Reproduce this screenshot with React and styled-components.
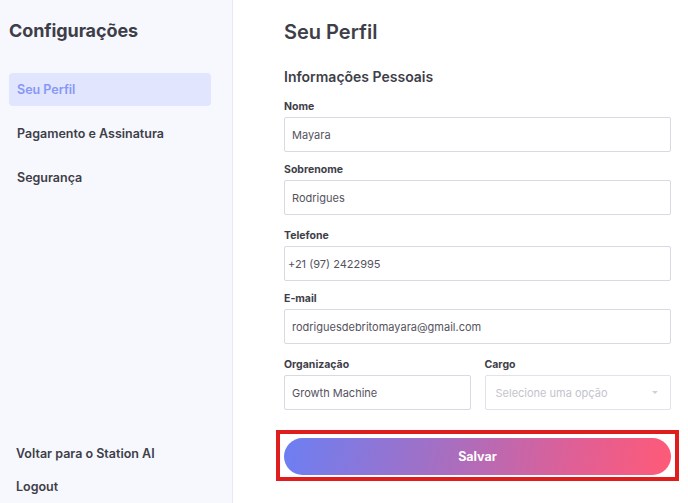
import React from "react";
import styled, { createGlobalStyle } from "styled-components";

const GlobalStyle = createGlobalStyle`
  html, body {
    margin: 0;
    padding: 0;
    background: #ffffff;
    font-family: Inter, "Noto Sans", sans-serif;
  }
  * { box-sizing: border-box; }
`;

const Page = styled.div`
  display: flex;
  height: 100vh;
  width: 100%;
  overflow: hidden;
`;

const Sidebar = styled.aside`
  width: 233px;
  flex-shrink: 0;
  background: #f6f8fe;
  border-right: 1px solid #e6e9f3;
  display: flex;
  flex-direction: column;
  justify-content: space-between;
  padding: 19px 21px 0 9px;
`;

const SideTitle = styled.h1`
  margin: 0 0 30px 0;
  font-size: 18px;
  line-height: 24px;
  font-weight: 700;
  color: #3e3e48;
  letter-spacing: -0.1px;
`;

const Nav = styled.nav`
  display: flex;
  flex-direction: column;
  gap: 11px;
`;

const NavItem = styled.a`
  display: flex;
  align-items: center;
  height: 33px;
  padding-left: 8px;
  border-radius: 4px;
  font-size: 12.5px;
  font-weight: 600;
  text-decoration: none;
  cursor: pointer;
  color: ${(p) => (p.$active ? "#8697f7" : "#3e3e48")};
  background: ${(p) => (p.$active ? "#e1e5fd" : "transparent")};
`;

const Bottom = styled.div`
  display: flex;
  flex-direction: column;
  padding-left: 7px;
`;

const BottomLink = styled.a`
  height: 33px;
  display: flex;
  align-items: center;
  font-size: 12.5px;
  font-weight: 600;
  color: #3e3e48;
  cursor: pointer;
`;

const Main = styled.main`
  flex: 1;
  padding: 19px 17px 0 51px;
  display: flex;
  flex-direction: column;
`;

const Title = styled.h2`
  margin: 0;
  font-size: 20px;
  line-height: 26px;
  font-weight: 600;
  color: #3e3e48;
`;

const Section = styled.h3`
  margin: 22px 0 13px 0;
  font-size: 14px;
  line-height: 20px;
  font-weight: 600;
  color: #3e3e48;
`;

const Form = styled.form`
  display: flex;
  flex-direction: column;
  gap: 11px;
`;

const Row = styled.div`
  display: flex;
  gap: 14px;
  margin-top: ${(p) => p.$push || 0}px;
`;

const Field = styled.label`
  display: flex;
  flex-direction: column;
  flex: 1;
  min-width: 0;
  margin-top: ${(p) => p.$push || 0}px;
`;

const Label = styled.span`
  font-size: 10.5px;
  line-height: 14px;
  font-weight: 700;
  color: #3e3e48;
  margin-bottom: 3px;
`;

const Input = styled.input`
  height: 35px;
  width: 100%;
  border: 1px solid #d8d9e2;
  border-radius: 2px;
  padding: 0 ${(p) => (p.$tight ? "3px" : "7px")};
  font-family: inherit;
  font-size: 11px;
  color: #55535e;
  outline: none;
  background: #fff;
`;

const Select = styled.div`
  height: 35px;
  border: 1px solid #e1e2ea;
  border-radius: 2px;
  padding: 0 12px 0 10px;
  display: flex;
  align-items: center;
  justify-content: space-between;
  font-size: 11px;
  color: #c3c4cc;
`;

const Caret = styled.span`
  width: 0;
  height: 0;
  border-left: 3.5px solid transparent;
  border-right: 3.5px solid transparent;
  border-top: 3.5px solid #cfd0d6;
`;

const Highlight = styled.div`
  margin: 9px -8px 0 -8px;
  border: 4px solid #e01d1d;
  padding: 4px 4px 2px 4px;
`;

const SaveButton = styled.button`
  width: 100%;
  height: 37px;
  border: none;
  border-radius: 19px;
  background: linear-gradient(100deg, #6c7ff3 0%, #a46fc3 40%, #e05f95 75%, #ff5a77 100%);
  color: #fff;
  font-family: inherit;
  font-size: 12.5px;
  font-weight: 700;
  cursor: pointer;
`;

const App = () => {
  return (
    <>
      <GlobalStyle />
      <Page>
        <Sidebar>
          <div>
            <SideTitle>Configurações</SideTitle>
            <Nav>
              <NavItem $active>Seu Perfil</NavItem>
              <NavItem>Pagamento e Assinatura</NavItem>
              <NavItem>Segurança</NavItem>
            </Nav>
          </div>
          <Bottom>
            <BottomLink>Voltar para o Station AI</BottomLink>
            <BottomLink>Logout</BottomLink>
          </Bottom>
        </Sidebar>

        <Main>
          <Title>Seu Perfil</Title>
          <Section>Informações Pessoais</Section>
          <Form onSubmit={(e) => e.preventDefault()}>
            <Field>
              <Label>Nome</Label>
              <Input defaultValue="Mayara" />
            </Field>
            <Field>
              <Label>Sobrenome</Label>
              <Input defaultValue="Rodrigues" />
            </Field>
            <Field $push={3}>
              <Label>Telefone</Label>
              <Input $tight defaultValue="+21 (97) 2422995" />
            </Field>
            <Field>
              <Label>E-mail</Label>
              <Input defaultValue="rodriguesdebritomayara@gmail.com" />
            </Field>
            <Row $push={3}>
              <Field>
                <Label>Organização</Label>
                <Input defaultValue="Growth Machine" />
              </Field>
              <Field as="div">
                <Label>Cargo</Label>
                <Select>
                  Selecione uma opção
                  <Caret />
                </Select>
              </Field>
            </Row>
            <Highlight>
              <SaveButton type="submit">Salvar</SaveButton>
            </Highlight>
          </Form>
        </Main>
      </Page>
    </>
  );
};

export default App;
